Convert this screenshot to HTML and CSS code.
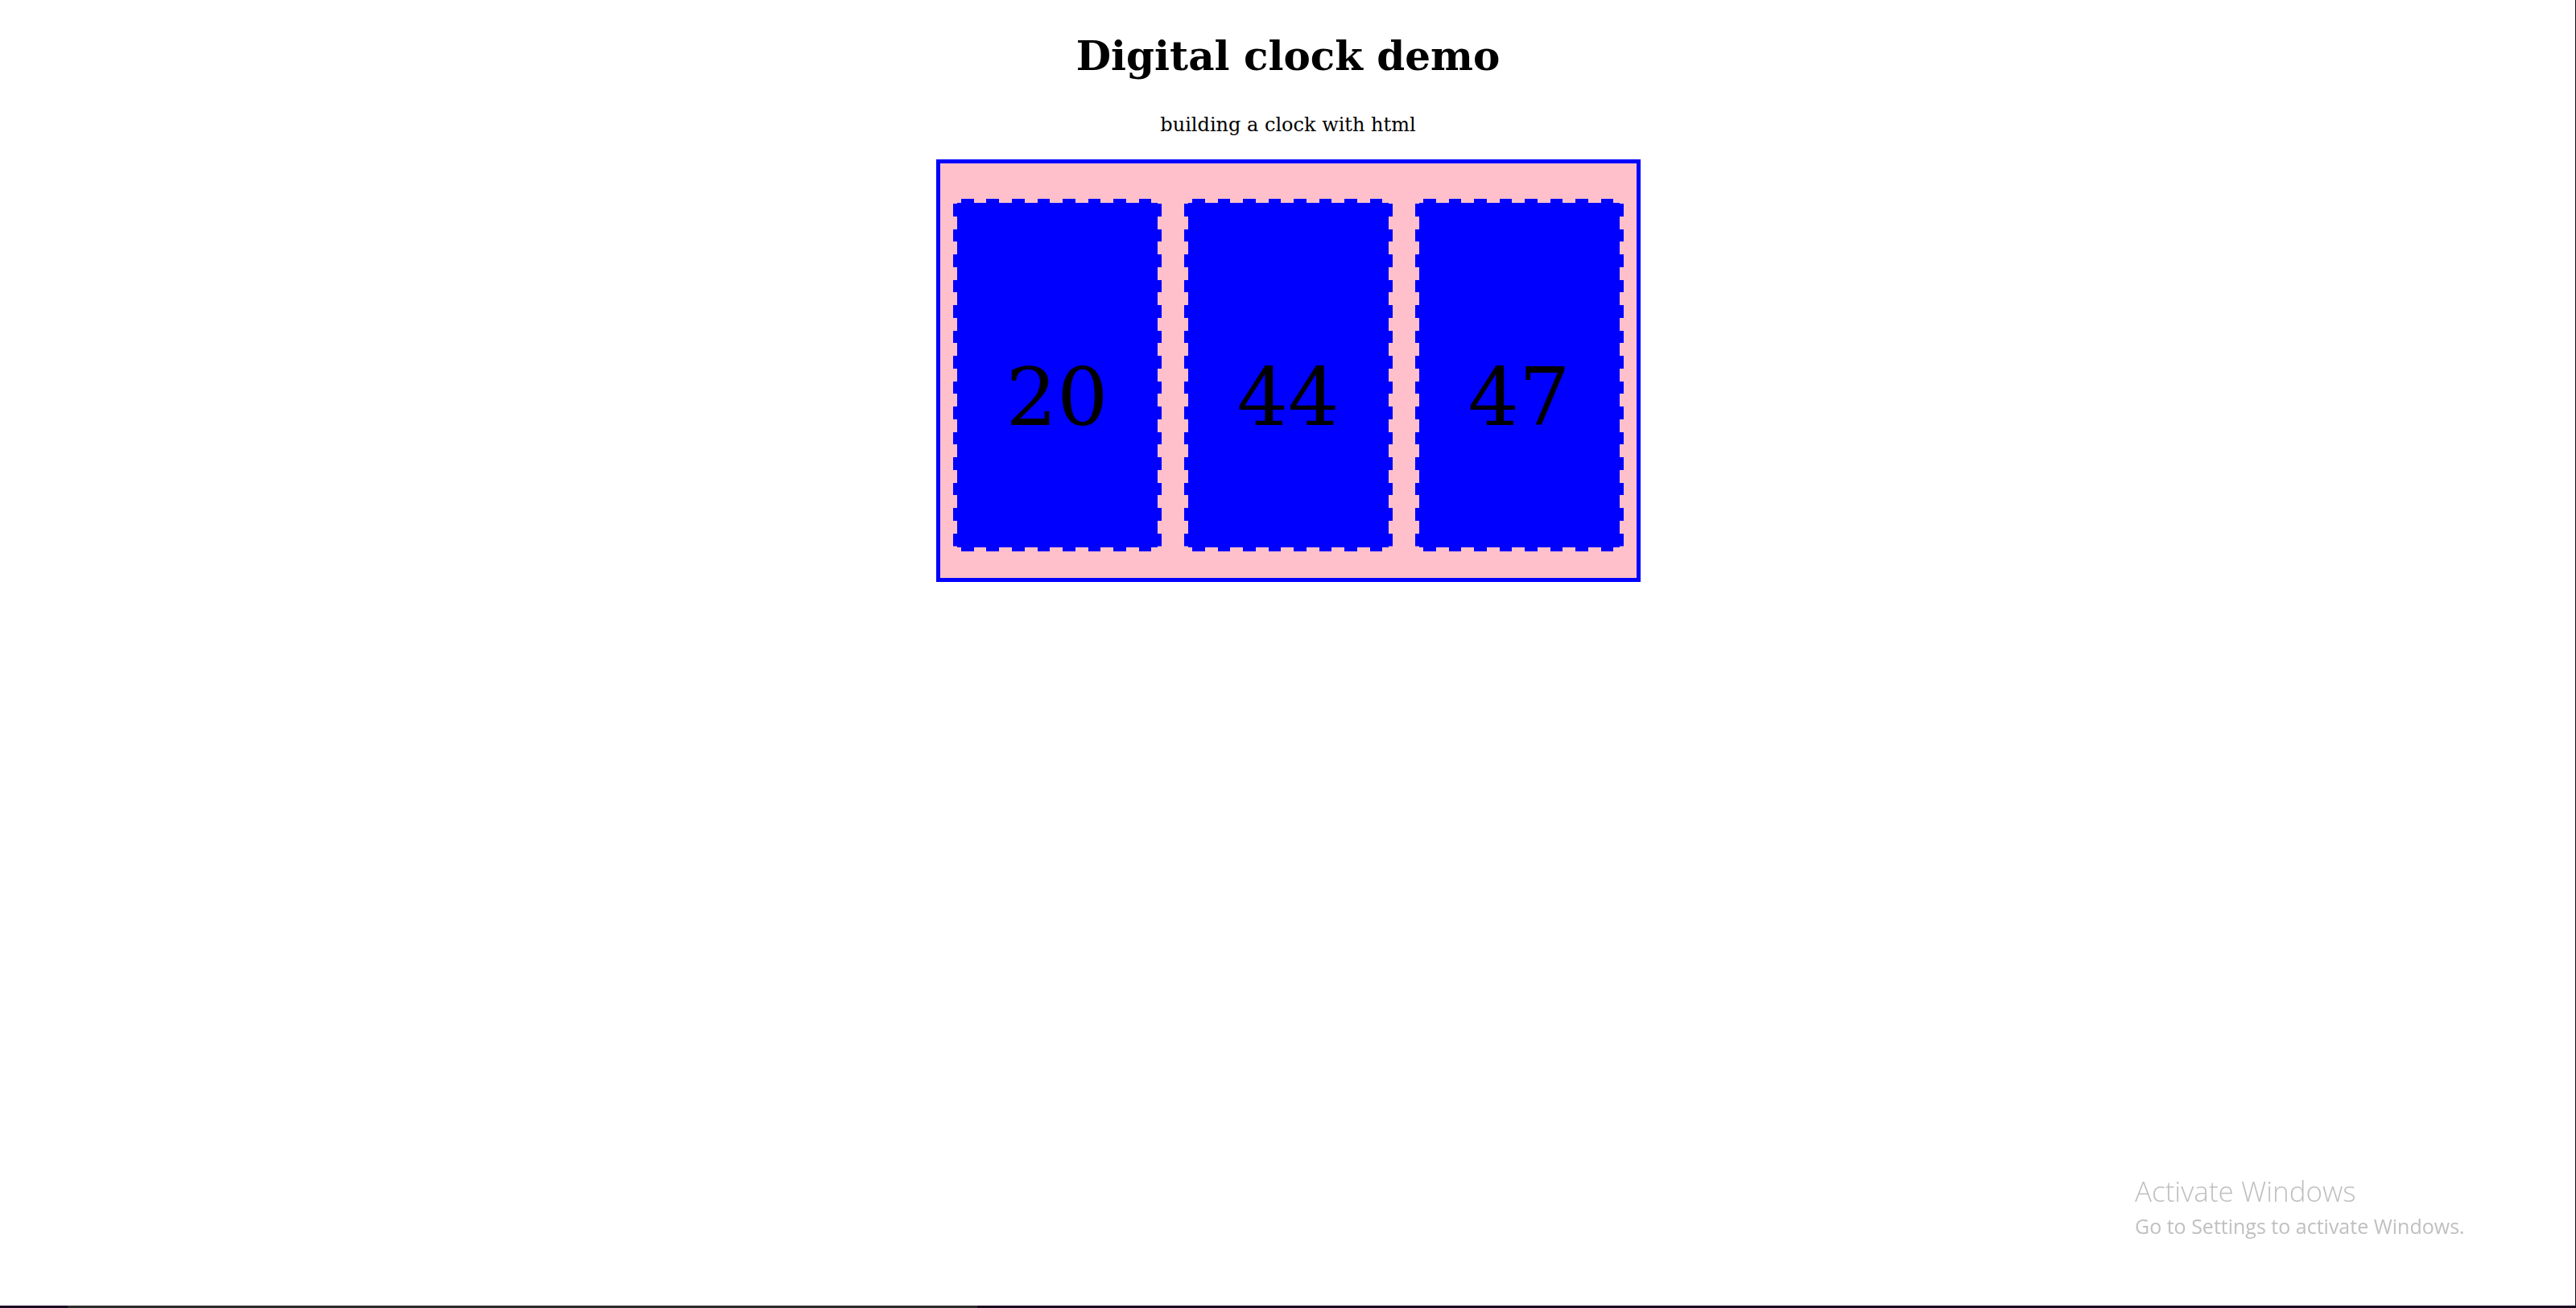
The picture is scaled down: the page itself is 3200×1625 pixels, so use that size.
FILE: index.html
```html
<!DOCTYPE html>
<html lang="en">
<head>
<meta charset="utf-8">
<title>Digital clock demo</title>
<link rel="stylesheet" href="styles.css">
</head>
<body>
<h1 class="title">Digital clock demo</h1>
<p class="subtitle">building a clock with html</p>
<div class="clock">
  <div class="unit"><span class="digits">20</span></div>
  <div class="unit"><span class="digits">44</span></div>
  <div class="unit"><span class="digits">47</span></div>
</div>
<div class="watermark">
  <div class="wm-title">Activate Windows</div>
  <div class="wm-sub">Go to Settings to activate Windows.</div>
</div>
<div class="edge-right"></div>
<div class="taskbar-edge">
  <span class="te-a"></span><span class="te-b"></span><span class="te-c"></span>
</div>
</body>
</html>
```

FILE: styles.css
```css
html, body {
  margin: 0;
  padding: 0;
  background: #ffffff;
}
body {
  font-family: "DejaVu Serif", "Liberation Serif", serif;
  color: #000;
}
.title {
  margin: 40px 0 0;
  text-align: center;
  font-size: 50px;
  font-weight: bold;
}
.subtitle {
  margin: 42px 0 29px;
  text-align: center;
  font-size: 24px;
}
.clock {
  display: flex;
  gap: 28px;
  width: max-content;
  margin: 0 auto;
  padding: 44px 16px 33px;
  border: 5px solid #0000ff;
  background: #ffc0cb;
}
.unit {
  box-sizing: border-box;
  width: 259px;
  height: 438px;
  padding-top: 54px;
  display: flex;
  align-items: center;
  justify-content: center;
  border: 5px solid transparent;
  background-image:
    repeating-linear-gradient(90deg, #0000ff 0 15.75px, transparent 15.75px 31.5px),
    repeating-linear-gradient(90deg, #0000ff 0 15.75px, transparent 15.75px 31.5px),
    repeating-linear-gradient(180deg, #0000ff 0 15.76px, transparent 15.76px 31.52px),
    repeating-linear-gradient(180deg, #0000ff 0 15.76px, transparent 15.76px 31.52px),
    linear-gradient(#0000ff, #0000ff);
  background-size:
    236.25px 5px,
    236.25px 5px,
    5px 425.6px,
    5px 425.6px,
    100% 100%;
  background-position:
    10.5px 0,
    10.5px 100%,
    0 5.7px,
    100% 5.7px,
    0 0;
  background-repeat: no-repeat;
  background-origin: border-box, border-box, border-box, border-box, padding-box;
  background-clip: border-box, border-box, border-box, border-box, padding-box;
}
.digits {
  font-size: 100px;
  color: #000;
}
.watermark {
  position: fixed;
  left: 2652px;
  top: 1459px;
  font-family: "Open Sans", "Noto Sans", sans-serif;
  color: #c0c0c0;
}
.wm-title {
  font-size: 35px;
  font-weight: 300;
  line-height: 42px;
}
.wm-sub {
  margin-top: 5px;
  font-size: 25px;
  line-height: 34px;
}
.edge-right {
  position: fixed;
  top: 0;
  right: 0;
  width: 1px;
  height: 100%;
  background: #1b0a1f;
}
.taskbar-edge {
  position: fixed;
  left: 0;
  bottom: 0;
  width: 100%;
  height: 3px;
  display: flex;
}
.te-a {
  width: 84px;
  background: #1b0a22;
}
.te-b {
  width: 1130px;
  background: #2c2c2c;
}
.te-c {
  flex: 1;
  background: #1b0a22;
}
```
